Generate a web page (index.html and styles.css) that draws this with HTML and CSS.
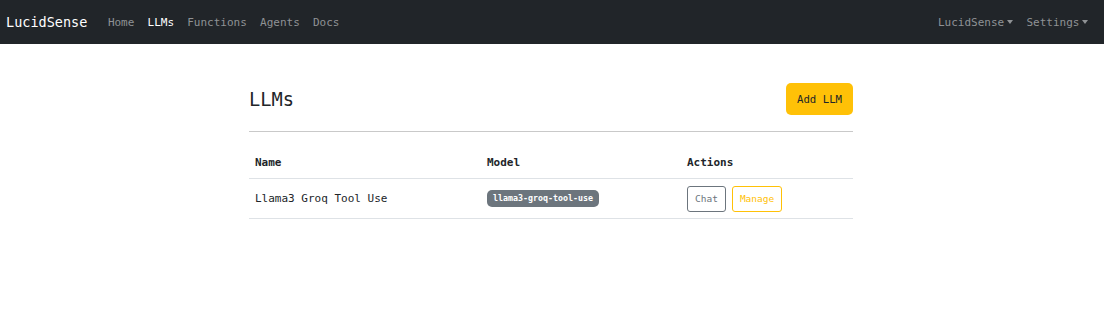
FILE: index.html
```html
<!DOCTYPE html>
<html lang="en">

<head>
    <meta charset="UTF-8">
    <meta name="viewport" content="width=device-width, initial-scale=1.0">
    <title>LLMs - LucidSense</title>
    <link rel="stylesheet" href="styles.css">
</head>

<body>
    <nav class="navbar">
        <div class="nav-left">
            <a class="brand" href="#">LucidSense</a>
            <a class="nav-link" href="#">Home</a>
            <a class="nav-link active" href="#">LLMs</a>
            <a class="nav-link" href="#">Functions</a>
            <a class="nav-link" href="#">Agents</a>
            <a class="nav-link" href="#">Docs</a>
        </div>
        <div class="nav-right">
            <a class="nav-link dropdown" href="#">LucidSense</a>
            <a class="nav-link dropdown" href="#">Settings</a>
        </div>
    </nav>

    <div class="container">
        <div class="page-header">
            <h1>LLMs</h1>
            <button class="btn btn-warning">Add LLM</button>
        </div>
        <hr>

        <table class="table">
            <thead>
                <tr>
                    <th class="col-name">Name</th>
                    <th class="col-model">Model</th>
                    <th>Actions</th>
                </tr>
            </thead>
            <tbody>
                <tr>
                    <td>Llama3 Groq Tool Use</td>
                    <td><span class="badge">llama3-groq-tool-use</span></td>
                    <td>
                        <div class="actions">
                            <button class="btn-sm btn-outline-secondary">Chat</button>
                            <button class="btn-sm btn-outline-warning">Manage</button>
                        </div>
                    </td>
                </tr>
            </tbody>
        </table>
    </div>
</body>

</html>
```

FILE: styles.css
```css
body {
    margin: 0;
    font-family: 'DejaVu Sans Mono', monospace;
    color: #212529;
    background-color: #fff;
}

a {
    text-decoration: none;
}

/* navbar */
.navbar {
    height: 44px;
    background-color: #212529;
    display: flex;
    align-items: center;
    justify-content: space-between;
    padding: 0 9px 0 6px;
}

.nav-left,
.nav-right {
    display: flex;
    align-items: center;
}

.brand {
    color: #fff;
    font-size: 13.5px;
    margin-right: 14px;
}

.nav-link {
    color: #8f9295;
    font-size: 11px;
    padding: 0 6.6px;
}

.nav-link.active {
    color: #fff;
}

.dropdown::after {
    content: "";
    display: inline-block;
    margin-left: 3px;
    vertical-align: 2px;
    border-top: 4px solid;
    border-left: 3.5px solid transparent;
    border-right: 3.5px solid transparent;
}

/* content */
.container {
    width: 604px;
    margin: 0 auto;
    padding-right: 2px;
}

.page-header {
    display: flex;
    justify-content: space-between;
    align-items: center;
    margin-top: 39px;
}

h1 {
    margin: 0;
    font-size: 18.7px;
    font-weight: normal;
}

.btn {
    font-family: inherit;
    font-size: 10.7px;
    height: 32px;
    padding: 0 11px;
    border: none;
    border-radius: 5px;
    cursor: pointer;
}

.btn-warning {
    background-color: #ffc107;
    color: #212529;
}

hr {
    margin: 16px 0 0;
    border: none;
    border-top: 1px solid #c9c9c9;
}

.table {
    width: 100%;
    margin-top: 12px;
    border-collapse: collapse;
    font-size: 11px;
}

.table th,
.table td {
    text-align: left;
    padding: 0 6px;
    border-bottom: 1px solid #dee2e6;
}

.table th {
    height: 31px;
    padding-top: 3px;
}

.table td {
    height: 39px;
}

.col-name {
    width: 220px;
}

.col-model {
    width: 188px;
}

.badge {
    display: inline-block;
    background-color: #6c757d;
    color: #fff;
    font-size: 8.3px;
    font-weight: bold;
    line-height: 17px;
    padding: 0 6px;
    border-radius: 5px;
}

.actions {
    display: flex;
    gap: 6px;
}

.btn-sm {
    font-family: inherit;
    font-size: 9.5px;
    height: 26px;
    padding: 0 7px;
    background: #fff;
    border-radius: 3px;
    cursor: pointer;
}

.btn-outline-secondary {
    border: 1px solid #6c757d;
    color: #6c757d;
}

.btn-outline-warning {
    border: 1px solid #ffc107;
    color: #ffc107;
}
```
